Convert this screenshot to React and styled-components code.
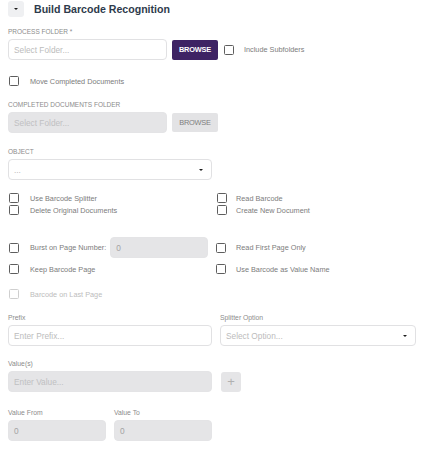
import React from "react";
import styled, { createGlobalStyle } from "styled-components";

const GlobalStyle = createGlobalStyle`
  body {
    margin: 0;
    background: #ffffff;
    font-family: "Liberation Sans", Arial, sans-serif;
  }
`;

const Page = styled.div`
  width: 408px;
  padding: 1px 12px 0 8px;
`;

const Header = styled.div`
  display: flex;
  align-items: center;
  gap: 10px;
  height: 16px;
`;

const Toggle = styled.div`
  width: 16px;
  height: 16px;
  border-radius: 3px;
  background: #eff0f2;
  display: flex;
  align-items: center;
  justify-content: center;
`;

const Caret = styled.span`
  width: 0;
  height: 0;
  border-left: ${(p) => p.$size || 2.5}px solid transparent;
  border-right: ${(p) => p.$size || 2.5}px solid transparent;
  border-top: ${(p) => (p.$size || 2.5) * 1.1}px solid #1d1d1d;
`;

const Title = styled.h1`
  margin: 0;
  font-size: 10.6px;
  font-weight: 700;
  color: #2e3b4c;
`;

const Block = styled.div`
  margin-top: ${(p) => p.$mt || 0}px;
`;

const Label = styled.div`
  font-size: ${(p) => (p.$caps ? 6.5 : 6.8)}px;
  line-height: 8px;
  height: 8px;
  color: #8c8c8c;
  text-transform: ${(p) => (p.$caps ? "uppercase" : "none")};
  margin-bottom: 3px;
  white-space: nowrap;
`;

const Row = styled.div`
  display: flex;
  align-items: center;
  gap: ${(p) => p.$gap || 5}px;
`;

const Input = styled.div`
  box-sizing: border-box;
  width: ${(p) => p.$w}px;
  height: 21px;
  border-radius: 4px;
  border: 1px solid ${(p) => (p.$disabled ? "#e4e4e6" : "#e1e1e3")};
  background: ${(p) => (p.$disabled ? "#e5e5e7" : "#ffffff")};
  color: ${(p) => (p.$value ? "#a3a3a3" : p.$disabled ? "#c0c0c2" : "#bcbcbc")};
  font-size: 8.3px;
  display: flex;
  align-items: center;
  justify-content: space-between;
  padding: 0 8px 0 5px;
  white-space: nowrap;
`;

const BrowseButton = styled.div`
  box-sizing: border-box;
  width: 46px;
  height: ${(p) => (p.$disabled ? 19 : 20)}px;
  border-radius: 2px;
  background: ${(p) => (p.$disabled ? "#e3e3e5" : "#3e2364")};
  color: ${(p) => (p.$disabled ? "#7d7d7d" : "#ffffff")};
  font-size: 7.4px;
  font-weight: ${(p) => (p.$disabled ? 400 : 700)};
  letter-spacing: -0.2px;
  display: flex;
  align-items: center;
  justify-content: center;
`;

const Check = styled.label`
  display: flex;
  align-items: center;
  gap: ${(p) => p.$gap || 10}px;
  height: 10px;
  font-size: 7.3px;
  color: ${(p) => (p.$disabled ? "#bdbdbd" : "#7c7c7c")};
  white-space: nowrap;
  padding-left: ${(p) => p.$pl || 0}px;
`;

const Box = styled.span`
  box-sizing: border-box;
  width: 10px;
  height: 10px;
  border-radius: 1.5px;
  border: 1.3px solid ${(p) => (p.$disabled ? "#cfcfcf" : "#5e5e5e")};
  flex: none;
`;

const Grid = styled.div`
  display: grid;
  grid-template-columns: ${(p) => p.$cols};
  column-gap: ${(p) => p.$gap || 0}px;
  row-gap: ${(p) => p.$rowGap || 0}px;
  align-items: center;
`;

const PlusButton = styled.div`
  width: 20px;
  height: 20px;
  border-radius: 3px;
  background: #e5e5e7;
  color: #b0b0b0;
  font-size: 13px;
  line-height: 20px;
  text-align: center;
`;

const CheckItem = ({ children, disabled, gap, pl }) => (
  <Check $disabled={disabled} $gap={gap} $pl={pl}>
    <Box $disabled={disabled} />
    {children}
  </Check>
);

export default function App() {
  return (
    <Page>
      <GlobalStyle />
      <Header>
        <Toggle>
          <Caret $size={2} />
        </Toggle>
        <Title>Build Barcode Recognition</Title>
      </Header>

      <Block $mt={11}>
        <Label $caps>Process Folder *</Label>
        <Row $gap={5}>
          <Input $w={159}>Select Folder...</Input>
          <BrowseButton>BROWSE</BrowseButton>
          <Check $gap={10} $pl={1}>
            <Box />
            Include Subfolders
          </Check>
        </Row>
      </Block>

      <Block $mt={16}>
        <CheckItem pl={1} gap={11}>Move Completed Documents</CheckItem>
      </Block>

      <Block $mt={15}>
        <Label $caps>Completed Documents Folder</Label>
        <Row $gap={5}>
          <Input $w={159} $disabled>
            Select Folder...
          </Input>
          <BrowseButton $disabled>BROWSE</BrowseButton>
        </Row>
      </Block>

      <Block $mt={15}>
        <Label $caps>Object</Label>
        <Input $w={204}>
          <span>...</span>
          <Caret />
        </Input>
      </Block>

      <Block $mt={13}>
        <Grid $cols="209px 1fr" $rowGap={2}>
          <CheckItem pl={1} gap={11}>Use Barcode Splitter</CheckItem>
          <CheckItem gap={9}>Read Barcode</CheckItem>
          <CheckItem pl={1} gap={11}>Delete Original Documents</CheckItem>
          <CheckItem gap={9}>Create New Document</CheckItem>
        </Grid>
      </Block>

      <Block $mt={22}>
        <Grid $cols="208px 1fr" $rowGap={6}>
          <Row $gap={4}>
            <CheckItem pl={1} gap={11}>Burst on Page Number:</CheckItem>
            <Input $w={98} $disabled $value>
              0
            </Input>
          </Row>
          <CheckItem gap={10}>Read First Page Only</CheckItem>
          <CheckItem pl={1} gap={11}>Keep Barcode Page</CheckItem>
          <CheckItem gap={10}>Use Barcode as Value Name</CheckItem>
        </Grid>
      </Block>

      <Block $mt={15}>
        <CheckItem pl={1} gap={11} disabled>
          Barcode on Last Page
        </CheckItem>
      </Block>

      <Block $mt={15}>
        <Grid $cols="204px 196px" $gap={8}>
          <div>
            <Label>Prefix</Label>
            <Input $w={204}>Enter Prefix...</Input>
          </div>
          <div>
            <Label>Splitter Option</Label>
            <Input $w={196}>
              <span>Select Option...</span>
              <Caret />
            </Input>
          </div>
        </Grid>
      </Block>

      <Block $mt={14}>
        <Label>Value(s)</Label>
        <Row $gap={9}>
          <Input $w={204} $disabled>
            Enter Value...
          </Input>
          <PlusButton>+</PlusButton>
        </Row>
      </Block>

      <Block $mt={17}>
        <Grid $cols="98px 98px" $gap={8}>
          <div>
            <Label>Value From</Label>
            <Input $w={98} $disabled $value>
              0
            </Input>
          </div>
          <div>
            <Label>Value To</Label>
            <Input $w={98} $disabled $value>
              0
            </Input>
          </div>
        </Grid>
      </Block>
    </Page>
  );
}
